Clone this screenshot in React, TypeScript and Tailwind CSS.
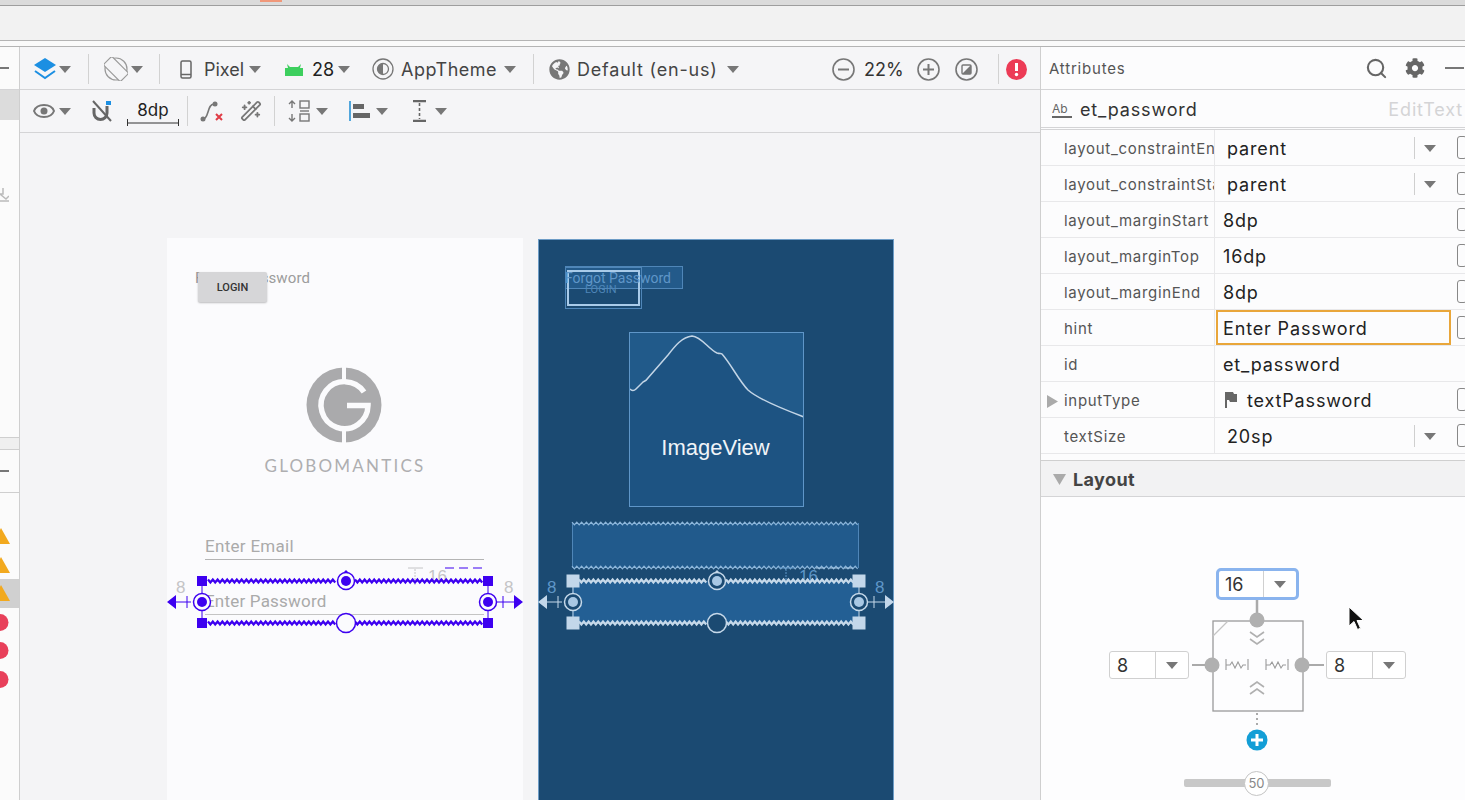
import React from "react";
import { Search, Wand2 } from "lucide-react";
import { FaCog, FaGlobeAmericas } from "react-icons/fa";

const Caret = ({ className = "" }: { className?: string }) => (
  <svg width="12" height="7" viewBox="0 0 12 7" className={`shrink-0 ${className}`}>
    <path d="M0 0h12L6 7z" fill="#777" />
  </svg>
);

const Sep = ({ className = "" }: { className?: string }) => (
  <div className={`w-px h-[30px] bg-[#d2d2d2] shrink-0 ${className}`} />
);

const wave = (x1: number, x2: number, y: number, a = 1.5, step = 2.4) => {
  const pts: string[] = [];
  let up = true;
  for (let x = x1; x <= x2; x += step) {
    pts.push(`${x},${y + (up ? -a : a)}`);
    up = !up;
  }
  return pts.join(" ");
};

type SelectionProps = { c: string; ring: string; hole: string; square: string; label: string; dash: string; size: number; className: string };

// selection overlay of a widget, coordinates are from the phone's left edge
const Selection = ({ c, ring, hole, square, label, dash, size, className }: SelectionProps) => {
  const squares = [[35, 343], [321, 343], [35, 385], [321, 385]];
  return (
    <svg width="356" height="90" viewBox="0 330 356 90" className={`absolute left-0 overflow-visible ${className}`}>
      <path d="M248 331V347" stroke={label} strokeWidth="1" strokeDasharray="2 1" />
      <path d="M241 330h15" stroke={label} strokeWidth="1" />
      <text x="261" y="344" fontSize="17" fill={label} fontFamily="Liberation Sans">16</text>
      <path d="M278 330h9M292 330h9M306 330h9" stroke={dash} strokeWidth="1.2" />
      <polyline points={wave(41, 170, 343)} fill="none" stroke={c} strokeWidth="2.2" />
      <polyline points={wave(188, 316, 343)} fill="none" stroke={c} strokeWidth="2.2" />
      <polyline points={wave(41, 170, 385)} fill="none" stroke={c} strokeWidth="2.2" />
      <polyline points={wave(188, 316, 385)} fill="none" stroke={c} strokeWidth="2.2" />
      <path d="M35 343V385M321 343V385" stroke={c} strokeWidth="1" />
      {squares.map(([x, y]) => (
        <rect key={`${x}-${y}`} x={x - size / 2} y={y - size / 2} width={size} height={size} fill={square} />
      ))}
      <path d="M175 336l4-4 4 4z" fill={square} />
      <circle cx="179" cy="343" r="8.5" fill={hole} stroke={c} strokeWidth="1.5" />
      <circle cx="179" cy="343" r="5" fill={ring} />
      <circle cx="179" cy="385" r="9.5" fill={hole} stroke={c} strokeWidth="1.5" />
      <circle cx="35" cy="364" r="8.5" fill={hole} stroke={c} strokeWidth="1.5" />
      <circle cx="35" cy="364" r="5" fill={ring} />
      <circle cx="321" cy="364" r="8.5" fill={hole} stroke={c} strokeWidth="1.5" />
      <circle cx="321" cy="364" r="5" fill={ring} />
      <path d="M0 364l9-7v14zM347 357l9 7-9 7z" fill={square} />
      <path d="M9 364H24M20 358V370M330 364H347M336 358V370" stroke={c} strokeWidth="1" />
      <text x="9" y="355" fontSize="17" fill={label} fontFamily="Liberation Sans">8</text>
      <text x="337" y="355" fontSize="17" fill={label} fontFamily="Liberation Sans">8</text>
    </svg>
  );
};

const Logo = () => (
  <svg width="76" height="76" viewBox="-38 -38 76 76" className="absolute left-[139px] top-[129px]">
    <circle r="37.5" fill="#aaaaac" />
    <path d="M0 -38V-24M0 24V38" stroke="#fbfbfd" strokeWidth="4" />
    <path d="M20 -13A23.5 23.5 0 1 0 24 0.5H3" fill="none" stroke="#fbfbfd" strokeWidth="5.5" />
  </svg>
);

const LightPhone = () => (
  <div className="relative w-[356px] h-[562px] bg-[#fbfbfd] shrink-0">
    <span className="absolute left-[28px] top-[29px] text-[15px] tracking-[0.1px] text-[#9c9c9c] font-['Roboto',sans-serif]">Forgot Password</span>
    <div className="absolute left-[31px] top-[34px] w-[69px] h-[30px] pt-[3px] bg-[#d6d6d8] rounded-[2px] shadow-[0_1px_2px_rgba(0,0,0,0.25)] flex items-center justify-center text-[11px] text-[#333] font-medium font-['Roboto',sans-serif]">
      LOGIN
    </div>
    <Logo />
    <div className="absolute left-0 w-full top-[215px] text-center text-[17px] tracking-[2.2px] text-[#aeaeb0] font-['Lato',sans-serif]">
      GLOBOMANTICS
    </div>
    <span className="absolute left-[38px] top-[296px] text-[17px] tracking-[0.3px] text-[#aaaaaa] font-['Roboto',sans-serif]">Enter Email</span>
    <div className="absolute left-[38px] top-[321px] w-[279px] h-px bg-[#b4b4b4]" />
    <span className="absolute left-[38px] top-[351px] text-[17px] tracking-[0.2px] text-[#aaaaaa] font-['Roboto',sans-serif]">Enter Password</span>
    <div className="absolute left-[38px] top-[376px] w-[279px] h-px bg-[#c4c4c4]" />
    <Selection c="#3d00f0" ring="#3d00f0" hole="#fbfbfd" square="#3d00f0" label="#c4c4c6" dash="#3d00f0" size={10} className="top-[330px]" />
  </div>
);

const DarkPhone = () => (
  <div className="relative w-[356px] h-[561px] mt-px bg-[#1b4a72] shadow-[inset_1px_1px_0_#6d9cc6,inset_-1px_0_0_#6d9cc6] shrink-0">
    <div className="absolute left-[27px] top-[27px] w-[118px] h-[23px] bg-[#235a8a] border border-[#4f86b8]" />
    <div className="absolute left-[27px] top-[28px] w-[77px] h-[42px] border border-[#4f86b8]" />
    <div className="absolute left-[29px] top-[31px] w-[73px] h-[36px] border-2 border-[#a9cbe9]" />
    <span className="absolute left-[27px] top-[29px] text-[14px] text-[#5f96c8] font-['Roboto',sans-serif]">Forgot Password</span>
    <span className="absolute left-[47px] top-[43px] text-[11px] text-[#4f86b8] font-['Roboto',sans-serif]">LOGIN</span>
    <div className="absolute left-[91px] top-[93px] w-[175px] h-[175px] border border-[#5f96c8] bg-[#1d5382] flex items-center justify-center overflow-hidden">
      <svg width="173" height="173" viewBox="630 333 173 173" className="absolute left-0 top-0">
        <path
          d="M630 389C632 391 634 391 636 389L643 382C645 381 646 381 648 378C655 370 662 362 668 355C675 346 682 337 692 336C702 337 708 349 717 353C720 354 721 353 722 354C731 364 739 381 748 390C758 399 780 408 804 417V333H630Z"
          fill="#215a8a"
        />
        <path
          d="M630 389C632 391 634 391 636 389L643 382C645 381 646 381 648 378C655 370 662 362 668 355C675 346 682 337 692 336C702 337 708 349 717 353C720 354 721 353 722 354C731 364 739 381 748 390C758 399 780 408 804 417"
          fill="none"
          stroke="#c3d5e6"
          strokeWidth="1.5"
        />
      </svg>
      <span className="relative top-[28px] -left-[1px] text-[22px] text-[#f0f4f8] font-['Liberation_Sans',Arial,sans-serif]">ImageView</span>
    </div>
    <div className="absolute left-[34px] top-[284px] w-[287px] h-[45px] bg-[#215a8c] border-x border-[#4f86b8]" />
    <svg width="356" height="60" viewBox="0 275 356 60" className="absolute left-0 top-[275px]">
      <polyline points={wave(34, 321, 284.5, 1.4)} fill="none" stroke="#8db6da" strokeWidth="1.2" />
      <polyline points={wave(34, 321, 328.5, 1.4)} fill="none" stroke="#8db6da" strokeWidth="1.2" />
    </svg>
    <div className="absolute left-[34px] top-[342px] w-[287px] h-[42px] bg-[#235f94]" />
    <Selection c="#c6d9ea" ring="#a9c8e4" hole="#1b4a72" square="#c3d7ea" label="#5f96c8" dash="#a9c9e6" size={13} className="top-[329px]" />
  </div>
);

const Row1 = () => (
  <div className="h-[43px] flex items-center border-b border-[#d4d4d6] text-[18px] text-[#444] pt-[2px]">
    <svg width="24" height="24" viewBox="0 0 24 24" className="ml-[13px] shrink-0">
      <path d="M12 1l11 7-11 7L1 8z" fill="#1c8fe2" />
      <path d="M2 14l10 7 10-7" fill="none" stroke="#1c8fe2" strokeWidth="2" />
    </svg>
    <Caret className="ml-[2px]" />
    <Sep className="ml-[17px]" />
    <svg width="24" height="24" viewBox="0 0 24 24" fill="none" stroke="#999" strokeWidth="1.2" className="ml-[15px] shrink-0">
      <circle cx="12" cy="12" r="11" />
      <rect x="6" y="0" width="12" height="24" rx="1.5" transform="rotate(-45 12 12)" fill="#f5f5f7" />
    </svg>
    <Caret className="ml-[3px]" />
    <Sep className="ml-[16px]" />
    <svg width="12" height="19" viewBox="0 0 12 19" fill="none" stroke="#666" strokeWidth="1.5" className="ml-[20px] shrink-0">
      <rect x="1" y="1" width="10" height="17" rx="1.5" />
      <path d="M1 14.5h10" />
    </svg>
    <span className="ml-[12px] w-[45px]">Pixel</span>
    <Caret />
    <svg width="18" height="13" viewBox="0 0 18 13" className="ml-[24px] shrink-0">
      <path d="M0 5h18v8H0z" fill="#3dcf5e" />
      <path d="M3 5l-1-4 3 3h8l3-3-1 4z" fill="#3dcf5e" />
    </svg>
    <span className="ml-[9px] w-[25px] text-[#222]">28</span>
    <Caret className="ml-[1px]" />
    <svg width="22" height="22" viewBox="0 0 22 22" className="ml-[22px] shrink-0">
      <circle cx="11" cy="11" r="10" fill="none" stroke="#777" strokeWidth="1.3" />
      <circle cx="11" cy="11" r="5.5" fill="none" stroke="#777" strokeWidth="1.3" />
      <path d="M11 5.5a5.5 5.5 0 0 0 0 11z" fill="#777" />
    </svg>
    <span className="ml-[7px] w-[103px] tracking-[0.5px]">AppTheme</span>
    <Caret />
    <Sep className="ml-[17px]" />
    <FaGlobeAmericas size={21} color="#777" className="ml-[15px] shrink-0" />
    <span className="ml-[7px] w-[150px] tracking-[0.8px]">Default (en-us)</span>
    <Caret />
    <svg width="23" height="23" viewBox="0 0 23 23" fill="none" stroke="#777" strokeWidth="1.6" className="ml-[93px] shrink-0">
      <circle cx="11.5" cy="11.5" r="10.5" />
      <path d="M6 11.5h11" strokeWidth="2" />
    </svg>
    <span className="ml-[9px] w-[53px] text-[#333]">22%</span>
    <svg width="23" height="23" viewBox="0 0 23 23" fill="none" stroke="#777" strokeWidth="1.6" className="shrink-0">
      <circle cx="11.5" cy="11.5" r="10.5" />
      <path d="M6 11.5h11M11.5 6v11" strokeWidth="2" />
    </svg>
    <svg width="23" height="23" viewBox="0 0 23 23" className="ml-[15px] shrink-0">
      <circle cx="11.5" cy="11.5" r="10.5" fill="none" stroke="#777" strokeWidth="1.6" />
      <rect x="7" y="7" width="9" height="9" rx="1" fill="none" stroke="#777" strokeWidth="1.4" />
      <path d="M16 7v9H7z" fill="#777" />
    </svg>
    <Sep className="ml-[20px]" />
    <svg width="21" height="21" viewBox="0 0 21 21" className="ml-[7px] shrink-0">
      <circle cx="10.5" cy="10.5" r="10.5" fill="#ec3b56" />
      <path d="M10.5 4v8" stroke="#fff" strokeWidth="3" />
      <circle cx="10.5" cy="15.5" r="1.7" fill="#fff" />
    </svg>
  </div>
);

const Row2 = () => (
  <div className="h-[43px] flex items-center border-b border-[#d4d4d6]">
    <svg width="22" height="14" viewBox="0 0 22 14" className="ml-[13px] shrink-0">
      <path d="M1 7c3-8 17-8 20 0c-3 8-17 8-20 0z" fill="none" stroke="#777" strokeWidth="2" />
      <circle cx="11" cy="7" r="3.5" fill="#777" />
    </svg>
    <Caret className="ml-[4px]" />
    <svg width="20" height="22" viewBox="0 0 20 22" className="ml-[21px] shrink-0">
      <path d="M2 8v5a6.5 6.5 0 0 0 13 0V6" fill="none" stroke="#666" strokeWidth="3" />
      <path d="M1 1l18 20" stroke="#666" strokeWidth="2" />
      <rect x="14" y="1" width="5" height="4" fill="#1c8fe2" />
    </svg>
    <div className="ml-[15px] w-[52px] flex flex-col items-center shrink-0">
      <span className="relative top-[2px] text-[17px] leading-[22px] text-[#222]">8dp</span>
      <svg width="52" height="7" viewBox="0 0 52 7">
        <path d="M0.5 0V7M51.5 0V7M0 4h52" stroke="#333" strokeWidth="1" fill="none" />
      </svg>
    </div>
    <Sep className="ml-[8px]" />
    <svg width="25" height="24" viewBox="0 0 25 24" className="ml-[12px] shrink-0">
      <path d="M3 20c6 0 4-15 11-15" fill="none" stroke="#777" strokeWidth="1.6" />
      <circle cx="3" cy="20" r="2.5" fill="#777" />
      <circle cx="15" cy="5" r="2.5" fill="#777" />
      <path d="M16 15l6 6M22 15l-6 6" stroke="#e03c46" strokeWidth="2" />
    </svg>
    <Wand2 size={22} color="#777" className="ml-[15px] shrink-0" />
    <Sep className="ml-[12px]" />
    <svg width="22" height="22" viewBox="0 0 22 22" fill="none" stroke="#777" strokeWidth="1.4" className="ml-[13px] shrink-0">
      <rect x="12" y="1" width="9" height="7" />
      <rect x="12" y="14" width="9" height="7" />
      <path d="M4 1v7M1 4l3-3 3 3" />
      <path d="M4 14v7M1 18l3 3 3-3" />
      <path d="M12 11h9" />
    </svg>
    <Caret className="ml-[6px]" />
    <svg width="22" height="20" viewBox="0 0 22 20" className="ml-[21px] shrink-0">
      <path d="M1 0v20" stroke="#2a93d5" strokeWidth="1.6" />
      <rect x="4" y="3" width="11" height="5" fill="#666" />
      <rect x="4" y="12" width="17" height="5" fill="#666" />
    </svg>
    <Caret className="ml-[5px]" />
    <svg width="13" height="22" viewBox="0 0 13 22" className="ml-[25px] shrink-0">
      <path d="M0 1h13M0 21h13" stroke="#666" strokeWidth="2.4" />
      <path d="M6.5 3v16" stroke="#666" strokeWidth="1.6" strokeDasharray="3 2" />
    </svg>
    <Caret className="ml-[9px]" />
  </div>
);

const Flag = ({ kind, selected }: { kind: "warn" | "err"; selected?: boolean }) => (
  <div className={`h-[28.6px] shrink-0 flex items-center ${selected ? "bg-[#d0d0d0]" : ""}`}>
    {kind === "warn" ? (
      <svg width="10" height="16" viewBox="0 0 10 16">
        <path d="M1 0L10 16H-8z" fill="#f2a91e" />
      </svg>
    ) : (
      <svg width="9" height="17" viewBox="0 0 9 17">
        <circle cx="0" cy="8.5" r="8.5" fill="#e8405a" />
      </svg>
    )}
  </div>
);

const Sidebar = () => (
  <div className="w-[20px] shrink-0 h-[753px] bg-[#fbfbfb] border-r border-[#cfcfcf] flex flex-col overflow-hidden">
    <div className="h-[43px] flex items-center border-b border-[#d4d4d6]">
      <div className="w-[9px] h-[2px] bg-[#777]" />
    </div>
    <div className="h-[30px] bg-[#dcdcdc]" />
    <div className="h-[317px] pt-[68px]">
      <svg width="9" height="14" viewBox="0 0 9 14">
        <path d="M3 0v6h-3l6 5 3-3M0 13h9" fill="none" stroke="#bbb" strokeWidth="1.5" />
      </svg>
    </div>
    <div className="h-[13px] bg-[#efefef] border-y border-[#cfcfcf]" />
    <div className="h-[43px] flex items-center border-b border-[#cfcfcf]">
      <div className="w-[9px] h-[2px] bg-[#777]" />
    </div>
    <div className="h-[29px]" />
    <Flag kind="warn" />
    <Flag kind="warn" />
    <Flag kind="warn" selected />
    <Flag kind="err" />
    <Flag kind="err" />
    <Flag kind="err" />
  </div>
);

type Attr = { name: string; value: string; combo?: boolean; arrow?: boolean; noBind?: boolean; focus?: boolean; flag?: boolean };

const attrs: Attr[] = [
  { name: "layout_constraintEn", value: "parent", combo: true },
  { name: "layout_constraintSta", value: "parent", combo: true },
  { name: "layout_marginStart", value: "8dp" },
  { name: "layout_marginTop", value: "16dp" },
  { name: "layout_marginEnd", value: "8dp" },
  { name: "hint", value: "Enter Password", focus: true },
  { name: "id", value: "et_password", noBind: true },
  { name: "inputType", value: "textPassword", arrow: true, flag: true },
  { name: "textSize", value: "20sp", combo: true },
];

const AttrRow = ({ a }: { a: Attr }) => (
  <div className="h-[36px] flex border-b border-[#e8e8ea] overflow-hidden">
    <div className="w-[174px] shrink-0 relative flex items-center pl-[23px] pt-[3px] border-r border-[#e8e8ea] text-[15px] tracking-[0.7px] text-[#555] overflow-hidden whitespace-nowrap">
      {a.arrow && (
        <svg width="11" height="13" viewBox="0 0 11 13" className="absolute left-[6px]">
          <path d="M0 0l11 6.5L0 13z" fill="#aaa" />
        </svg>
      )}
      {a.name}
    </div>
    <div className="flex-1 relative flex items-center text-[18px] tracking-[0.85px] text-[#222]">
      {a.focus ? (
        <div className="ml-px w-[235px] h-[35px] border-2 border-[#e9a63a] flex items-center pl-[5px] pt-[2px]">{a.value}</div>
      ) : a.flag ? (
        <>
          <svg width="13" height="16" viewBox="0 0 13 16" className="ml-[9px]">
            <path d="M1 0h8l1 2h3v8H6L5 8H3v8H1z" fill="#666" />
          </svg>
          <span className="ml-[10px] pt-[2px]">{a.value}</span>
        </>
      ) : (
        <span className={`pt-[2px] ${a.combo ? "ml-[12px]" : "ml-[8px]"}`}>{a.value}</span>
      )}
      {a.combo && (
        <>
          <div className="absolute left-[199px] top-[7px] w-px h-[22px] bg-[#cfcfcf]" />
          <Caret className="absolute left-[209px] top-[15px]" />
        </>
      )}
      {!a.noBind && <div className="absolute left-[242px] top-[6px] w-[10px] h-[23px] rounded-[3px] border border-[#888]" />}
    </div>
  </div>
);

const Field = ({ value, className = "" }: { value: string; className?: string }) => (
  <div className={`w-[80px] h-[28px] bg-white border border-[#d0d0d0] rounded-[3px] flex items-center text-[18px] text-[#333] shrink-0 ${className}`}>
    <span className="flex-1 pl-[7px]">{value}</span>
    <div className="w-[33px] h-full border-l border-[#d0d0d0] flex items-center justify-center">
      <Caret />
    </div>
  </div>
);

const Widget = () => (
  <svg width="137" height="152" viewBox="0 0 137 152" className="shrink-0">
    <path d="M68 0V20" stroke="#aaa" strokeWidth="2.5" />
    <rect x="24" y="21" width="90" height="90" fill="none" stroke="#9a9a9a" strokeWidth="1.3" />
    <path d="M24 36L39 21" stroke="#c4c4c4" strokeWidth="1.3" />
    <circle cx="68" cy="20" r="7.5" fill="#b0b0b0" />
    <circle cx="23" cy="65" r="7.5" fill="#b0b0b0" />
    <circle cx="113" cy="65" r="7.5" fill="#b0b0b0" />
    <path d="M3 65H16M120 65H135" stroke="#aaa" strokeWidth="2" />
    <path d="M61 32l7 5 7-5M61 39l7 5 7-5M61 94l7-5 7 5M61 87l7-5 7 5" fill="none" stroke="#b0b0b0" strokeWidth="1.6" />
    <path
      d="M37 59v11M37 65h4l2-3 3 6 3-6 3 6 2-3h3M59 59v11M77 59v11M77 65h4l2-3 3 6 3-6 3 6 2-3h3M99 59v11"
      fill="none"
      stroke="#9a9a9a"
      strokeWidth="1.1"
    />
    <path d="M68 113V128" stroke="#aaa" strokeWidth="2" strokeDasharray="2 3" />
    <circle cx="68" cy="140" r="10.5" fill="#139ed6" />
    <path d="M62 140h12M68 134v12" stroke="#fff" strokeWidth="3" />
  </svg>
);

const LayoutPanel = () => (
  <div className="flex-1 bg-[#fdfdfe] relative flex flex-col items-center pl-[9px] pt-[71px]">
    <div className="w-[83px] h-[32px] bg-white border-[3px] border-[#8ab4ee] rounded-[5px] flex items-center text-[18px] text-[#333]">
      <span className="flex-1 pl-[6px]">16</span>
      <div className="w-[33px] h-full border-l border-[#d0d0d0] flex items-center justify-center">
        <Caret />
      </div>
    </div>
    <div className="flex items-start">
      <Field value="8" className="mt-[51px]" />
      <Widget />
      <Field value="8" className="mt-[51px]" />
    </div>
    <div className="relative w-[147px] h-[8px] mt-[27px] rounded-[2px] bg-[#c8c8c8]">
      <div className="absolute left-[60px] -top-[8px] w-[25px] h-[25px] rounded-full bg-white border border-[#c4c4c4] flex items-center justify-center text-[13px] text-[#888]">
        50
      </div>
    </div>
    <svg width="19" height="27" viewBox="0 0 19 27" className="absolute left-[306px] top-[109px]">
      <path d="M2 1v19l5-4.5 3.5 8 3-1.3-3.5-7.7h6.5z" fill="#111" stroke="#fff" strokeWidth="1" />
    </svg>
  </div>
);

const AttributesPanel = () => (
  <div className="flex-1 h-[753px] flex flex-col overflow-hidden bg-[#fcfcfd]">
    <div className="h-[43px] shrink-0 flex items-center border-b border-[#d4d4d6] pl-[8px] text-[15px] tracking-[0.8px] text-[#555]">
      <span className="w-[316px] pt-[2px]">Attributes</span>
      <Search size={23} color="#666" strokeWidth={2.2} />
      <FaCog size={20} color="#666" className="ml-[17px]" />
      <div className="ml-[20px] w-[19px] h-[2px] bg-[#777]" />
    </div>
    <div className="h-[40px] shrink-0 flex items-center border-b-[3px] border-double border-[#d4d4d6] pl-[11px] pt-[2px] text-[18px] tracking-[0.85px] text-[#333]">
      <span className="text-[12px] leading-[14px] tracking-normal text-[#666] border-b-2 border-[#666] w-[20px]">Ab</span>
      <span className="ml-[8px]">et_password</span>
      <span className="ml-auto pr-[2px] text-[#d4d4d6]">EditText</span>
    </div>
    <div className="shrink-0">
      {attrs.map(a => (
        <AttrRow key={a.name} a={a} />
      ))}
    </div>
    <div className="h-[7px] shrink-0 border-b border-[#cfcfcf]" />
    <div className="h-[36px] shrink-0 flex items-center bg-[#f2f2f3] border-b border-[#d4d4d6] pl-[12px] pt-[2px] text-[18px] font-bold tracking-[0.4px] text-[#444]">
      <svg width="13" height="11" viewBox="0 0 13 11" className="mr-[7px]">
        <path d="M0 0h13L6.5 11z" fill="#aaa" />
      </svg>
      Layout
    </div>
    <LayoutPanel />
  </div>
);

export default function App() {
  return (
    <div className="w-[1465px] h-[800px] overflow-hidden flex flex-col bg-[#f5f5f7] font-['Inter',sans-serif]">
      <div className="h-[6px] shrink-0 bg-[#dbdbdb] border-b border-[#9e9e9e]">
        <div className="ml-[260px] w-[22px] h-[2px] bg-[#f0987a]" />
      </div>
      <div className="h-[34px] shrink-0 bg-[#f2f2f2]" />
      <div className="h-[7px] shrink-0 bg-[#fafafa] border-y border-[#b4b4b4]" />
      <div className="flex flex-1 min-h-0">
        <Sidebar />
        <div className="w-[1021px] shrink-0 border-r border-[#cfcfcf] flex flex-col">
          <Row1 />
          <Row2 />
          <div className="flex-1 min-h-0 bg-[#f4f4f6] pl-[147px] pt-[105px] flex gap-[15px] overflow-hidden">
            <LightPhone />
            <DarkPhone />
          </div>
        </div>
        <AttributesPanel />
      </div>
    </div>
  );
}
